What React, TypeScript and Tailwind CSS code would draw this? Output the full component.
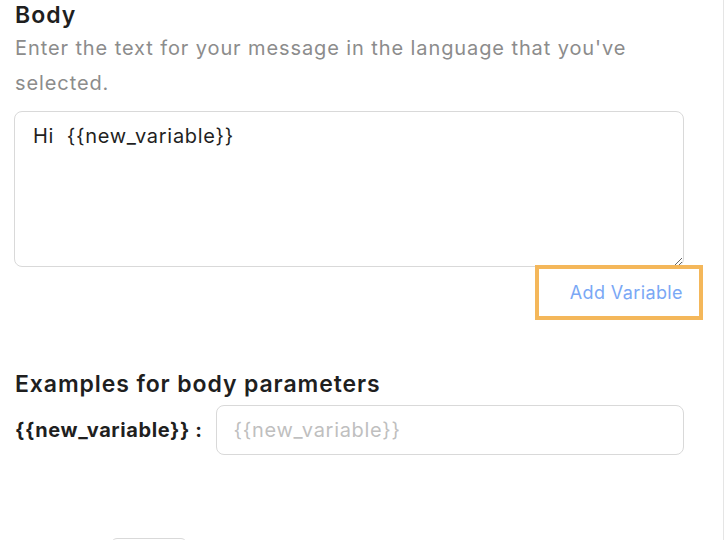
import { useState } from "react";

export default function App() {
    const [body, setBody] = useState("Hi  {{new_variable}}");

    return (
        <div className="w-[724px] h-[540px] overflow-hidden bg-white font-['Inter',sans-serif]">
            <div className="h-full border-r border-[#e5e5e5] pl-[14px] pr-[40px]">
                <h2 className="text-[23px] leading-[30px] font-semibold tracking-[1px] text-[#1f1f1f] pl-px">Body</h2>
                <p className="mt-[1px] text-[20px] leading-[35px] tracking-[0.9px] text-[#8c8c8c] pl-px">
                    Enter the text for your message in the language that you've selected.
                </p>

                <textarea
                    value={body}
                    onChange={(e) => setBody(e.target.value)}
                    className="mt-[10px] block w-[670px] h-[156px] rounded-[8px] border border-[#d9d9d9] px-[18px] py-[10px] text-[20px] leading-[28px] tracking-[0.7px] text-[#1f1f1f] outline-none resize-y"
                />

                <div className="flex justify-end w-[689px]">
                    <button className="-mt-[2px] h-[55px] w-[168px] border-4 border-[#f4b75a] flex items-center justify-end pr-[16px] text-[18px] tracking-[0.4px] text-[#7aa8f5]">
                        Add Variable
                    </button>
                </div>

                <h3 className="mt-[49px] text-[23px] leading-[30px] font-semibold tracking-[0.9px] text-[#1f1f1f] pl-px">
                    Examples for body parameters
                </h3>

                <div className="mt-[6px] flex items-center gap-[13px] w-[670px]">
                    <span className="shrink-0 whitespace-nowrap text-[20px] font-bold tracking-[0.6px] text-[#1f1f1f] pl-px">
                        {"{{new_variable}}"} :
                    </span>
                    <input
                        placeholder="{{new_variable}}"
                        className="flex-1 min-w-0 h-[50px] rounded-[8px] border border-[#d9d9d9] px-[17px] text-[20px] tracking-[0.7px] text-[#1f1f1f] placeholder:text-[#bfbfbf] outline-none"
                    />
                </div>

                <div className="mt-[83px] ml-[97px] w-[76px] h-[30px] rounded-[6px] border border-[#d9d9d9]" />
            </div>
        </div>
    );
}
